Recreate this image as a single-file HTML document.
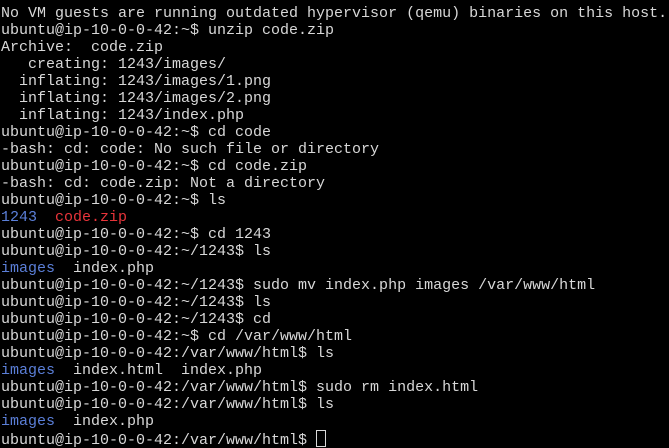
<!DOCTYPE html>
<html><head><style>
html,body{margin:0;padding:0;background:#000;width:669px;height:448px;overflow:hidden}
pre{margin:0;padding:5px 0 0 1px;font-family:"Liberation Mono",monospace;font-size:15px;line-height:17px;color:#d8d8d8;white-space:pre}
.b{color:#5b7fd8}.r{color:#e8343a}
.c{display:inline-block;width:8px;height:15px;border:1px solid #d8d8d8;vertical-align:-3px}
</style></head><body><pre>No VM guests are running outdated hypervisor (qemu) binaries on this host.
ubuntu@ip-10-0-0-42:~$ unzip code.zip
Archive:  code.zip
   creating: 1243/images/
  inflating: 1243/images/1.png
  inflating: 1243/images/2.png
  inflating: 1243/index.php
ubuntu@ip-10-0-0-42:~$ cd code
-bash: cd: code: No such file or directory
ubuntu@ip-10-0-0-42:~$ cd code.zip
-bash: cd: code.zip: Not a directory
ubuntu@ip-10-0-0-42:~$ ls
<span class="b">1243</span>  <span class="r">code.zip</span>
ubuntu@ip-10-0-0-42:~$ cd 1243
ubuntu@ip-10-0-0-42:~/1243$ ls
<span class="b">images</span>  index.php
ubuntu@ip-10-0-0-42:~/1243$ sudo mv index.php images /var/www/html
ubuntu@ip-10-0-0-42:~/1243$ ls
ubuntu@ip-10-0-0-42:~/1243$ cd
ubuntu@ip-10-0-0-42:~$ cd /var/www/html
ubuntu@ip-10-0-0-42:/var/www/html$ ls
<span class="b">images</span>  index.html  index.php
ubuntu@ip-10-0-0-42:/var/www/html$ sudo rm index.html
ubuntu@ip-10-0-0-42:/var/www/html$ ls
<span class="b">images</span>  index.php
ubuntu@ip-10-0-0-42:/var/www/html$ <span class="c"></span></pre></body></html>
